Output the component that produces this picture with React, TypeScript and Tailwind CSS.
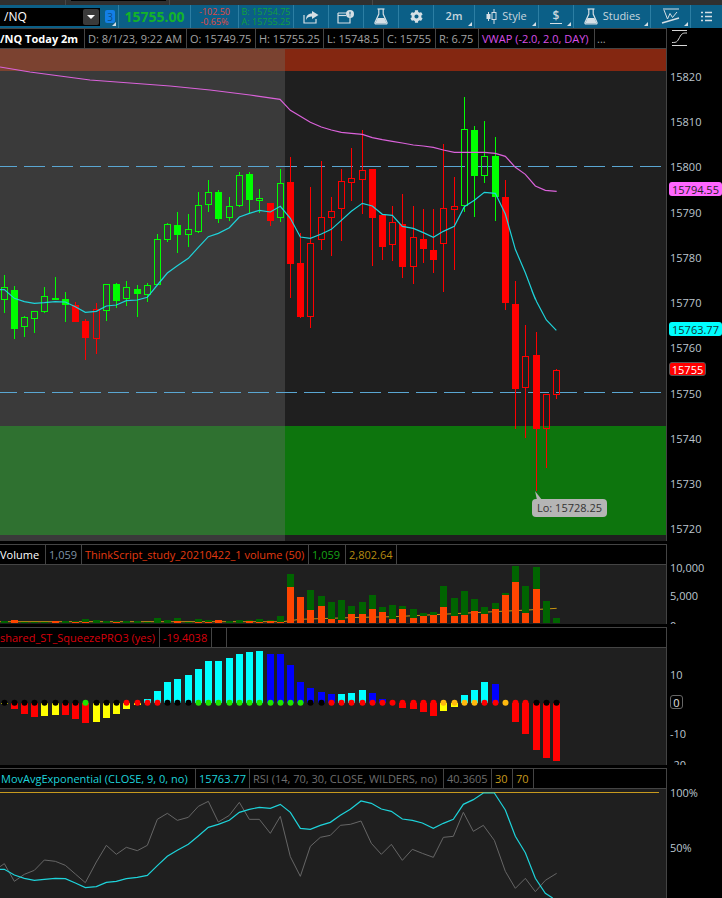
import type { ReactNode } from "react";
import { FaCog } from "react-icons/fa";

// x wickTop bodyTop bodyBottom wickBottom, h = hollow, g/r = colour
type Candle = [number, number, number, number, number, "g" | "r", 0 | 1];

const candles: Candle[] = [
  [4, 275, 287, 299, 313, "g", 1], [14, 286, 290, 329, 339, "g", 0], [24, 316, 317, 326, 337, "g", 1],
  [34, 311, 311, 318, 333, "g", 1], [44, 287, 296, 311, 313, "g", 1], [55, 277, 298, 299, 299, "g", 1],
  [65, 292, 299, 305, 322, "g", 0], [75, 302, 305, 322, 322, "r", 0], [85, 319, 321, 338, 360, "r", 0],
  [96, 303, 309, 338, 354, "r", 1], [106, 284, 284, 310, 321, "g", 1], [116, 283, 284, 301, 308, "g", 0],
  [126, 281, 287, 298, 306, "g", 1], [137, 285, 289, 294, 317, "g", 0], [147, 283, 285, 294, 302, "g", 1],
  [157, 234, 239, 284, 284, "g", 1], [167, 223, 224, 239, 242, "g", 1], [177, 212, 225, 235, 253, "g", 0],
  [188, 214, 229, 234, 247, "g", 1], [198, 192, 205, 231, 233, "g", 1], [208, 180, 192, 204, 212, "g", 1],
  [218, 190, 192, 219, 223, "g", 0], [229, 197, 206, 217, 221, "g", 1], [239, 172, 175, 205, 207, "g", 1],
  [249, 172, 174, 200, 213, "g", 0], [259, 189, 198, 200, 213, "g", 1], [270, 203, 203, 221, 226, "r", 0],
  [280, 169, 183, 217, 222, "g", 1], [290, 157, 182, 264, 298, "r", 0], [300, 233, 263, 317, 318, "r", 0],
  [310, 187, 243, 316, 328, "r", 1], [321, 161, 217, 239, 250, "r", 1], [331, 197, 211, 217, 256, "r", 1],
  [341, 169, 181, 208, 241, "r", 1], [351, 148, 178, 182, 201, "r", 1], [362, 130, 170, 179, 214, "r", 1],
  [372, 169, 169, 218, 266, "r", 0], [382, 214, 215, 247, 260, "r", 0], [392, 206, 222, 244, 261, "r", 1],
  [402, 194, 224, 267, 278, "r", 0], [413, 206, 237, 266, 284, "r", 1], [423, 209, 239, 249, 263, "r", 0],
  [433, 209, 250, 260, 273, "r", 0], [443, 144, 208, 243, 292, "r", 1], [454, 177, 206, 209, 270, "r", 1],
  [464, 97, 129, 205, 212, "g", 1], [474, 126, 130, 176, 217, "g", 0], [484, 121, 156, 175, 183, "g", 1],
  [495, 137, 156, 197, 221, "g", 0], [505, 180, 197, 303, 310, "r", 0], [515, 281, 304, 389, 429, "r", 0],
  [525, 325, 356, 387, 438, "r", 1], [536, 332, 355, 429, 491, "r", 0], [546, 394, 394, 428, 468, "r", 1],
  [556, 369, 370, 394, 399, "r", 1],
];

const xs = candles.map((c) => c[0]);

// lines traced off the picture at 3x, [offsetX, offsetY, x, y, x, y...]
function trace(ox: number, oy: number, raw: number[]) {
  const out: string[] = [];
  for (let i = 0; i < raw.length; i += 2) out.push(`${ox + raw[i] / 3},${oy + raw[i + 1] / 3}`);
  return out.join(" ");
}

const ema = [
  trace(0, 150, [0, 419, 13, 419, 43, 445, 73, 455, 103, 460, 133, 458, 166, 455, 196, 456, 226, 470, 256, 487, 289, 484, 319, 468, 349, 465, 379, 452, 412, 450, 442, 442, 472, 405, 502, 369, 532, 347, 565, 325, 595, 292, 625, 260, 655, 250, 688, 233, 718, 201, 748, 190, 778, 181, 811, 186, 841, 169]),
  trace(280, 90, [31, 385, 61, 441, 91, 445, 124, 432, 154, 418, 184, 391, 214, 364, 247, 340, 277, 348, 307, 373, 337, 376, 367, 409, 400, 415, 430, 428, 460, 442, 490, 424, 523, 409, 553, 350, 583, 331, 613, 307, 646, 310, 676, 372, 706, 478, 736, 548, 766, 628]),
  trace(480, 290, [155, 0, 170, 35, 199, 90, 229, 121]),
].join(" ");

const vwap =
  "0,67 30,72 60,76 90,80 130,83 170,86 210,90 250,95 " +
  trace(280, 90, [0, 28, 31, 61, 61, 79, 91, 97, 124, 111, 154, 120, 184, 127, 214, 130, 247, 133, 277, 143, 307, 149, 337, 154, 367, 159, 400, 165, 430, 168, 460, 172, 490, 180, 523, 187, 553, 187, 583, 187, 613, 187, 646, 190, 676, 199, 706, 232, 736, 253, 766, 288, 796, 301, 830, 304]);

const rsiEma = [
  trace(0, 765, [0, 313, 13, 313, 43, 330, 73, 340, 103, 346, 133, 343, 166, 340, 196, 341, 226, 354, 256, 368, 289, 365, 319, 352, 349, 349, 379, 341, 412, 337, 442, 331, 472, 302, 502, 274, 532, 256, 565, 238, 595, 213, 625, 187, 655, 178, 688, 166, 718, 142, 748, 133, 778, 127, 811, 130, 841, 118, 871, 142, 901, 190, 931, 193, 961, 181, 991, 172, 1021, 151, 1051, 133]),
  trace(361, 765, [0, 108, 31, 115, 61, 132, 91, 139, 124, 162, 154, 166, 184, 174, 217, 190, 247, 175, 277, 163, 307, 118, 337, 104, 367, 84, 400, 84, 433, 135, 463, 214, 493, 263, 523, 340, 553, 385, 575, 399]),
].join(" ");

const rsi = [
  trace(0, 765, [0, 305, 13, 296, 43, 349, 73, 328, 103, 316, 133, 285, 166, 289, 196, 301, 226, 327, 256, 353, 289, 291, 319, 241, 349, 268, 379, 247, 412, 257, 442, 241, 472, 163, 502, 145, 532, 166, 565, 157, 595, 124, 625, 109, 655, 171, 688, 151, 718, 112, 748, 163, 778, 163, 811, 205, 841, 154, 871, 275, 901, 334, 931, 244, 961, 217, 991, 211, 1021, 181, 1051, 178]),
  trace(361, 765, [0, 168, 31, 235, 61, 268, 91, 238, 124, 286, 154, 253, 184, 265, 217, 277, 247, 217, 277, 214, 307, 142, 337, 199, 367, 181, 400, 226, 433, 319, 463, 370, 493, 340, 523, 380, 553, 346, 587, 325]),
].join(" ");

// total and orange bar tops at 3x, baseline 250
const volume: [number, number][] = [
  [243, 250], [240, 241], [245, 250], [245, 250], [245, 250], [243, 244], [244, 250], [243, 245], [237, 246],
  [240, 250], [243, 250], [243, 245], [244, 250], [243, 250], [245, 250], [234, 250], [240, 250], [234, 244],
  [245, 250], [237, 246], [240, 246], [240, 240], [243, 250], [240, 250], [241, 244], [237, 245], [241, 243],
  [228, 246], [102, 141], [171, 171], [150, 210], [168, 198], [186, 237], [180, 240], [198, 222], [186, 222],
  [165, 207], [201, 216], [195, 237], [198, 207], [207, 234], [219, 228], [216, 225], [138, 201], [174, 228],
  [153, 225], [177, 213], [201, 222], [189, 207], [159, 165], [78, 126], [138, 219], [81, 147], [183, 250], [234, 250],
];

const volumeAvg = `0,621.7 283,621.7 300,619.3 ${trace(361, 540, [0, 232, 100, 230, 200, 225, 300, 220, 400, 215, 500, 210, 587, 205])}`;

// end of histogram bar at 3x (baseline 173), bar colour, dot colour
const squeeze: [number, string, string][] = [
  [176, "#ffff00", "#000"], [191, "#ff0000", "#000"], [207, "#ff0000", "#000"], [216, "#ff0000", "#000"],
  [213, "#ffff00", "#000"], [210, "#ffff00", "#000"], [210, "#ff0000", "#000"], [222, "#ff0000", "#000"],
  [234, "#ff0000", "#1ee600"], [231, "#ffff00", "#000"], [219, "#ffff00", "#000"], [207, "#ffff00", "#000"],
  [192, "#ffff00", "#ff0000"], [180, "#ffff00", "#ff0000"], [162, "#00ffff", "#ff0000"], [138, "#00ffff", "#ff0000"],
  [111, "#00ffff", "#000"], [102, "#00ffff", "#000"], [90, "#00ffff", "#000"], [72, "#00ffff", "#1ee600"],
  [48, "#00ffff", "#1ee600"], [48, "#00ffff", "#1ee600"], [39, "#00ffff", "#1ee600"], [27, "#00ffff", "#1ee600"],
  [21, "#00ffff", "#1ee600"], [18, "#00ffff", "#1ee600"], [27, "#0000ff", "#1ee600"], [27, "#0000ff", "#1ee600"],
  [60, "#0000ff", "#1ee600"], [111, "#0000ff", "#1ee600"], [129, "#0000ff", "#000"], [141, "#0000ff", "#000"],
  [147, "#0000ff", "#ff0000"], [147, "#00ffff", "#ff0000"], [144, "#00ffff", "#ff0000"], [135, "#00ffff", "#ff0000"],
  [144, "#0000ff", "#ff0000"], [162, "#0000ff", "#ff0000"], [173, "#ff0000", "#ff0000"], [189, "#ff0000", "#ff0000"],
  [192, "#ff0000", "#ff0000"], [201, "#ff0000", "#ff0000"], [213, "#ff0000", "#ff0000"], [198, "#ffff00", "#ffb90f"],
  [186, "#ffff00", "#ffb90f"], [150, "#00ffff", "#ffb90f"], [135, "#00ffff", "#ffb90f"], [111, "#00ffff", "#ff0000"],
  [118, "#0000ff", "#ff0000"], [173, "#ffb90f", "#ffb90f"], [231, "#ff0000", "#ff0000"], [267, "#ff0000", "#ff0000"],
  [315, "#ff0000", "#000"], [339, "#ff0000", "#000"], [348, "#ff0000", "#000"],
];

function Corner() {
  return <span className="absolute bottom-[2px] right-[2px] h-0 w-0 border-b-[4px] border-l-[4px] border-b-[#d5dfe5] border-l-transparent" />;
}

function ToolCell({ className, corner, children }: { className: string; corner?: boolean; children?: ReactNode }) {
  return (
    <div className={`relative flex h-full shrink-0 items-center justify-center border-r border-[#2c7ea3] ${className}`}>
      {children}
      {corner && <Corner />}
    </div>
  );
}

function FlaskIcon() {
  return (
    <svg width="14" height="17" viewBox="0 0 14 17" fill="none">
      <path d="M3.5 1h7" stroke="#d5dfe5" strokeWidth="1.2" />
      <path d="M4.8 1v5L1 14.5c-.3.8.2 1.5 1 1.5h10c.8 0 1.3-.7 1-1.5L9.2 6V1" stroke="#d5dfe5" strokeWidth="1.2" />
      <path d="M3.6 10h6.8l2.4 5.6H1.2z" fill="#d5dfe5" />
    </svg>
  );
}

function Toolbar() {
  return (
    <div className="flex h-[23px] bg-[#0b5f87] text-[11px] text-[#c9d6de]">
      <div className="relative flex h-full w-[119px] shrink-0 items-center border-r border-[#2c7ea3]">
        <div className="flex h-[18px] w-[100px] items-center justify-between bg-black pl-[4px] pr-[1px] text-[12px] text-white">
          /NQ
          <span className="flex h-[16px] w-[16px] items-center justify-center rounded-[2px] bg-[#3a3a3a]">
            <span className="h-0 w-0 border-x-[4px] border-t-[4px] border-x-transparent border-t-white" />
          </span>
        </div>
        <span className="ml-[5px] flex h-[13px] w-[10px] items-center justify-center rounded-[2px] bg-[#137fe6] text-[10px] leading-none text-[#0b4f8a]">3</span>
        <Corner />
      </div>
      <ToolCell className="w-[72px] text-[14px] font-bold text-[#14b32a]">15755.00</ToolCell>
      <ToolCell className="w-[48px] flex-col text-[9px] leading-[10px] text-[#e2483f]">
        <span>-102.50</span>
        <span>-0.65%</span>
      </ToolCell>
      <ToolCell className="w-[55px] flex-col text-[9px] leading-[10px] text-[#12a03c]">
        <span>B: 15754.75</span>
        <span>A: 15755.25</span>
      </ToolCell>
      <ToolCell className="w-[35px]">
        <svg width="16" height="14" viewBox="0 0 16 14" fill="none">
          <path d="M1 5v8h12V9" stroke="#d5dfe5" strokeWidth="1.2" />
          <path d="M9 1l6.5 4L9 9V6.6C6 6.6 4.3 7.6 3 10c0-4 2-6.4 6-6.4z" fill="#d5dfe5" />
        </svg>
      </ToolCell>
      <ToolCell className="w-[35px]">
        <svg width="18" height="14" viewBox="0 0 18 14" fill="none">
          <path d="M1 3h9M1 3v10h12V8" stroke="#d5dfe5" strokeWidth="1.2" />
          <path d="M1 5.5h8" stroke="#d5dfe5" strokeWidth="1.2" />
          <circle cx="13" cy="4" r="4" fill="#d5dfe5" />
          <path d="M13 1.8v2.8M13 5.4v.9" stroke="#0b5f87" strokeWidth="1.1" />
        </svg>
      </ToolCell>
      <ToolCell className="w-[35px]">
        <FlaskIcon />
      </ToolCell>
      <ToolCell className="w-[35px]">
        <FaCog className="h-[13px] w-[13px] text-[#d5dfe5]" />
      </ToolCell>
      <ToolCell className="w-[41px] font-semibold" corner>
        2m
      </ToolCell>
      <ToolCell className="w-[64px] gap-[5px]" corner>
        <svg width="11" height="15" viewBox="0 0 11 15" fill="none">
          <path d="M2.5 3v9" stroke="#d5dfe5" />
          <rect x="0.5" y="5" width="4" height="5" fill="#d5dfe5" />
          <path d="M8 0v15" stroke="#d5dfe5" />
          <rect x="6" y="3.5" width="4" height="7" fill="#0b5f87" stroke="#d5dfe5" />
        </svg>
        Style
      </ToolCell>
      <ToolCell className="w-[35px]" corner>
        <span className="flex flex-col items-center text-[12px] font-semibold leading-[12px]">
          $
          <span className="mt-[1px] h-[1px] w-[12px] bg-[#d5dfe5]" />
        </span>
      </ToolCell>
      <ToolCell className="w-[77px] gap-[5px]" corner>
        <FlaskIcon />
        Studies
      </ToolCell>
      <ToolCell className="w-[40px]" corner>
        <svg width="20" height="17" viewBox="0 0 20 17" fill="none">
          <path d="M2 1h16" stroke="#d5dfe5" />
          <path d="M3 2l3.5 9L9 5.5l2.5 4L16 4" stroke="#d5dfe5" />
          <path d="M1 15l17-5" stroke="#d5dfe5" strokeWidth="1.4" />
        </svg>
      </ToolCell>
      <div className="flex h-full flex-1 items-center justify-center">
        <svg width="11" height="11" viewBox="0 0 11 11" fill="none">
          <path d="M0 1.5h2M4 1.5h7M0 5.5h2M4 5.5h7M0 9.5h2M4 9.5h7" stroke="#d5dfe5" strokeWidth="1.4" />
        </svg>
      </div>
    </div>
  );
}

function Cell({ className, children }: { className: string; children?: ReactNode }) {
  return <div className={`h-full shrink-0 truncate border-r border-[#444] pl-[3px] leading-[19px] ${className}`}>{children}</div>;
}

type AxisItem = { text: string; y: number };

function Panel({ top, className, legend, axis, extra, children }: { top: number; className: string; legend: ReactNode; axis: AxisItem[]; extra?: ReactNode; children: ReactNode }) {
  return (
    <div className={`relative flex shrink-0 overflow-hidden ${className}`}>
      <div className="flex w-[667px] shrink-0 flex-col border-r border-[#444]">
        <div className="flex h-[21px] shrink-0 border-y border-[#444] bg-black text-[11px]">{legend}</div>
        <div className="relative min-h-0 flex-1 bg-[#1f1f1f]">{children}</div>
      </div>
      <div className="relative flex-1 bg-black">
        {axis.map((a) => (
          <span key={a.text} className="absolute left-[3px] text-[11px] leading-[16px] text-[#bcc6cf]" style={{ top: a.y - top - 8 }}>
            {a.text}
          </span>
        ))}
        {extra}
      </div>
    </div>
  );
}

function PriceChart() {
  return (
    <>
      <svg className="block h-full w-full" viewBox="0 49 666 492" preserveAspectRatio="none">
        <rect x="0" y="49" width="285" height="492" fill="#3a3a3a" />
        <rect x="285" y="49" width="381" height="492" fill="#1f1f1f" />
        <rect x="0" y="49" width="285" height="22" fill="#7b4230" />
        <rect x="285" y="49" width="381" height="22" fill="#842711" />
        <rect x="0" y="426" width="285" height="109" fill="#2f7130" />
        <rect x="285" y="426" width="381" height="109" fill="#0d750d" />
        {[166.5, 392.5].map((y) => (
          <line key={y} x1="0" x2="661" y1={y} y2={y} stroke="#5aa6d2" strokeDasharray="21 7" strokeDashoffset="4" shapeRendering="crispEdges" />
        ))}
        <g shapeRendering="crispEdges">
          {candles.map(([x, wt, bt, bb, wb, c, hollow]) => {
            const color = c === "g" ? "#00ff00" : "#ff0000";
            const cx = x + 0.5;
            return (
              <g key={x} stroke={color}>
                <line x1={cx} x2={cx} y1={wt} y2={bt} />
                <line x1={cx} x2={cx} y1={bb} y2={wb} />
                {hollow ? (
                  <rect x={cx - 3} y={bt + 0.5} width="6" height={bb - bt} fill="none" />
                ) : (
                  <rect x={cx - 3.5} y={bt} width="7" height={bb - bt} fill={color} stroke="none" />
                )}
              </g>
            );
          })}
        </g>
        <polyline points={vwap} fill="none" stroke="#da62da" strokeWidth="1.2" />
        <polyline points={ema} fill="none" stroke="#1ed3da" strokeWidth="1.2" />
        <polygon points="535,491 537,500 542,500" fill="#b5b5b5" />
      </svg>
      <span className="absolute left-[532px] top-[450px] flex h-[18px] w-[75px] items-center justify-center rounded-[4px] bg-[#b5b5b5] text-[11px] text-[#333]">Lo: 15728.25</span>
    </>
  );
}

function VolumeChart() {
  return (
    <svg className="block h-full w-full" viewBox="0 565 666 59" preserveAspectRatio="none">
      <polyline points={volumeAvg} fill="none" stroke="#c8940f" />
      <g shapeRendering="crispEdges">
        {volume.map(([total, orange], i) => (
          <g key={i}>
            <rect x={xs[i] - 3} y={540 + total / 3} width="7" height={(250 - total) / 3} fill="#006400" />
            <rect x={xs[i] - 3} y={540 + orange / 3} width="7" height={(250 - orange) / 3} fill="#ff4500" />
          </g>
        ))}
      </g>
    </svg>
  );
}

function SqueezeChart() {
  return (
    <svg className="block h-full w-full" viewBox="0 648 666 117" preserveAspectRatio="none">
      <g shapeRendering="crispEdges">
        {squeeze.map(([end, bar], i) => {
          const y = 645 + Math.min(end, 173) / 3;
          return <rect key={i} x={xs[i] - 3} y={y} width="7" height={Math.abs(end - 173) / 3} fill={bar} />;
        })}
      </g>
      {squeeze.map(([, , dot], i) => (
        <circle key={i} cx={xs[i] + 0.5} cy="702.7" r="3" fill={dot} />
      ))}
    </svg>
  );
}

function RsiChart() {
  return (
    <svg className="block h-full w-full" viewBox="0 789 666 109" preserveAspectRatio="none">
      <line x1="0" x2="659" y1="792.5" y2="792.5" stroke="#c79a1e" shapeRendering="crispEdges" />
      <polyline points={rsi} fill="none" stroke="#666" />
      <polyline points={rsiEma} fill="none" stroke="#1ed3da" strokeWidth="1.2" />
    </svg>
  );
}

function PriceTag({ className, children }: { className: string; children: ReactNode }) {
  return <span className={`absolute left-[2px] flex h-[14px] items-center justify-center rounded-[3px] text-[11px] leading-none ${className}`}>{children}</span>;
}

export default function App() {
  return (
    <div className="flex h-[898px] w-[722px] flex-col gap-[3px] overflow-hidden bg-black font-['Open_Sans',sans-serif]">
      <div className="shrink-0">
        <div className="flex h-[5px] bg-[#303030]">
          <div className="w-[66px] border-r border-[#484848]" />
          <div className="h-[1px] w-[95px] translate-x-[5px] bg-black" />
          <div className="ml-[8px] w-[204px] border-x border-[#484848]" />
        </div>
        <Toolbar />
      </div>

      <Panel
        top={28}
        className="-mt-[3px] h-[513px]"
        axis={[
          { text: "15820", y: 77 }, { text: "15810", y: 122 }, { text: "15800", y: 167 }, { text: "15790", y: 213 },
          { text: "15780", y: 258 }, { text: "15770", y: 303 }, { text: "15760", y: 348 }, { text: "15750", y: 394 },
          { text: "15740", y: 439 }, { text: "15730", y: 484 }, { text: "15720", y: 529 },
        ]}
        extra={
          <>
            <svg className="absolute left-[5px] top-[2px]" width="16" height="16" viewBox="0 0 16 16" fill="none">
              <path d="M0 .5h15M0 15.5h15" stroke="#d8d8d8" />
              <path d="M0 12.5c5 0 5-.5 7.5-5S11 3 15 3" stroke="#d8d8d8" />
            </svg>
            <PriceTag className="top-[154px] w-[53px] bg-[#ff66ff] text-[#222]">15794.55</PriceTag>
            <PriceTag className="top-[294px] w-[53px] bg-[#00ffff] text-[#133]">15763.77</PriceTag>
            <PriceTag className="top-[334px] w-[37px] border border-[#555] bg-[#ff0000] text-white">15755</PriceTag>
          </>
        }
        legend={
          <>
            <Cell className="w-[85px] !pl-0 font-bold text-white">/NQ Today 2m</Cell>
            <Cell className="w-[102px] text-[#a3a3a3]">D: 8/1/23, 9:22 AM</Cell>
            <Cell className="w-[69px] text-[#a3a3a3]">O: 15749.75</Cell>
            <Cell className="w-[68px] text-[#a3a3a3]">H: 15755.25</Cell>
            <Cell className="w-[60px] text-[#a3a3a3]">L: 15748.5</Cell>
            <Cell className="w-[52px] text-[#a3a3a3]">C: 15755</Cell>
            <Cell className="w-[43px] text-[#a3a3a3]">R: 6.75</Cell>
            <Cell className="w-[116px] text-[#d84fe8]">VWAP (-2.0, 2.0, DAY)</Cell>
            <div className="pl-[2px] leading-[19px] text-[#a3a3a3]">...</div>
          </>
        }
      >
        <PriceChart />
      </Panel>

      <Panel
        top={544}
        className="h-[80px]"
        axis={[{ text: "10,000", y: 568 }, { text: "5,000", y: 596 }, { text: "0", y: 626 }]}
        legend={
          <>
            <Cell className="w-[46px] !pl-0 text-white">Volume</Cell>
            <Cell className="w-[36px] text-[#7f93a5]">1,059</Cell>
            <Cell className="w-[227px] text-[#e23a10]">ThinkScript_study_20210422_1 volume (50)</Cell>
            <Cell className="w-[37px] text-[#17a317]">1,059</Cell>
            <Cell className="w-[51px] text-[#b58a10]">2,802.64</Cell>
          </>
        }
      >
        <VolumeChart />
      </Panel>

      <Panel
        top={627}
        className="h-[138px]"
        axis={[{ text: "10", y: 675 }, { text: "-10", y: 734 }, { text: "-20", y: 765 }]}
        extra={
          <span className="absolute left-[3px] top-[68px] flex h-[14px] w-[13px] items-center justify-center rounded-[3px] border border-[#666] text-[11px] leading-none text-[#e0e0e0]">0</span>
        }
        legend={
          <>
            <Cell className="w-[160px] !pl-0 text-[#d8000c]">shared_ST_SqueezePRO3 (yes)</Cell>
            <Cell className="w-[52px] text-[#d8000c]">-19.4038</Cell>
            <Cell className="w-[15px]" />
          </>
        }
      >
        <SqueezeChart />
      </Panel>

      <Panel
        top={768}
        className="h-[130px]"
        axis={[{ text: "100%", y: 793 }, { text: "50%", y: 848 }]}
        legend={
          <>
            <Cell className="w-[196px] !pl-[1px] text-[#1ed3da]">MovAvgExponential (CLOSE, 9, 0, no)</Cell>
            <Cell className="w-[54px] text-[#1ed3da]">15763.77</Cell>
            <Cell className="w-[194px] text-[#6e6e6e]">RSI (14, 70, 30, CLOSE, WILDERS, no)</Cell>
            <Cell className="w-[48px] text-[#6e6e6e]">40.3605</Cell>
            <Cell className="w-[21px] text-[#c79a1e]">30</Cell>
            <Cell className="w-[21px] text-[#c79a1e]">70</Cell>
          </>
        }
      >
        <RsiChart />
      </Panel>
    </div>
  );
}
